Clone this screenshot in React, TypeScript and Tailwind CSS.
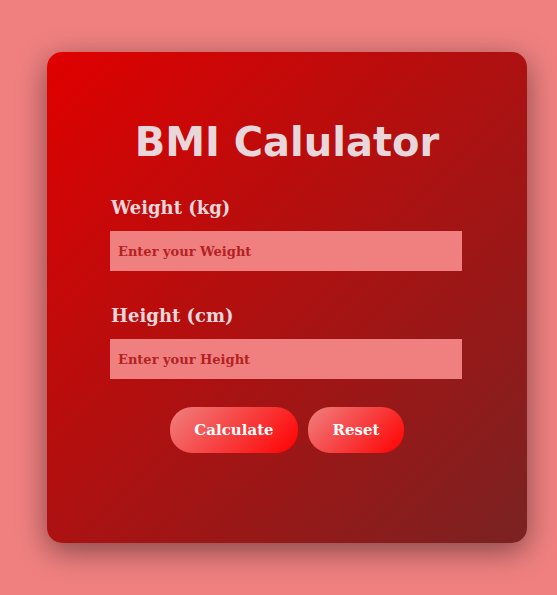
export default function App() {
  const serif = { fontFamily: '"DejaVu Serif", "Liberation Serif", serif' };
  return (
    <div className="min-h-[595px] w-full bg-[#f08080] pt-[52px] pl-[47px]">
      <div className="flex h-[491px] w-[480px] flex-col items-center rounded-[15px] bg-[linear-gradient(135deg,#e00000,#7a2222)] pt-[70px] shadow-[0_8px_30px_rgba(0,0,0,0.45)]">
        <h1
          className="text-[40px] font-bold leading-none text-[#e8d6da]"
          style={{ fontFamily: '"DejaVu Sans", Verdana, sans-serif' }}
        >
          BMI Calulator
        </h1>
        <div className="mt-[31px] mr-[2px] flex w-[352px] flex-col" style={serif}>
          <label className="pl-px text-[18px] font-bold leading-[30px] text-[#e8d6da]">Weight (kg)</label>
          <input
            type="text"
            placeholder="Enter your Weight"
            className="mt-[8px] h-[40px] w-full bg-[#f08080] px-2 text-[13px] font-bold text-[#b22222] outline-none placeholder:text-[#b22222]"
          />
          <label className="mt-[30px] pl-px text-[18px] font-bold leading-[30px] text-[#e8d6da]">Height (cm)</label>
          <input
            type="text"
            placeholder="Enter your Height"
            className="mt-[8px] h-[40px] w-full bg-[#f08080] px-2 text-[13px] font-bold text-[#b22222] outline-none placeholder:text-[#b22222]"
          />
          <div className="mt-[28px] ml-[2px] flex justify-center gap-[10px]">
            <button className="h-[46px] w-[128px] rounded-[22px] bg-[linear-gradient(135deg,#f08080,#ff0000)] text-[15px] font-bold text-white">
              Calculate
            </button>
            <button className="h-[46px] w-[96px] rounded-[22px] bg-[linear-gradient(135deg,#f08080,#ff0000)] text-[15px] font-bold text-white">
              Reset
            </button>
          </div>
        </div>
      </div>
    </div>
  );
}
